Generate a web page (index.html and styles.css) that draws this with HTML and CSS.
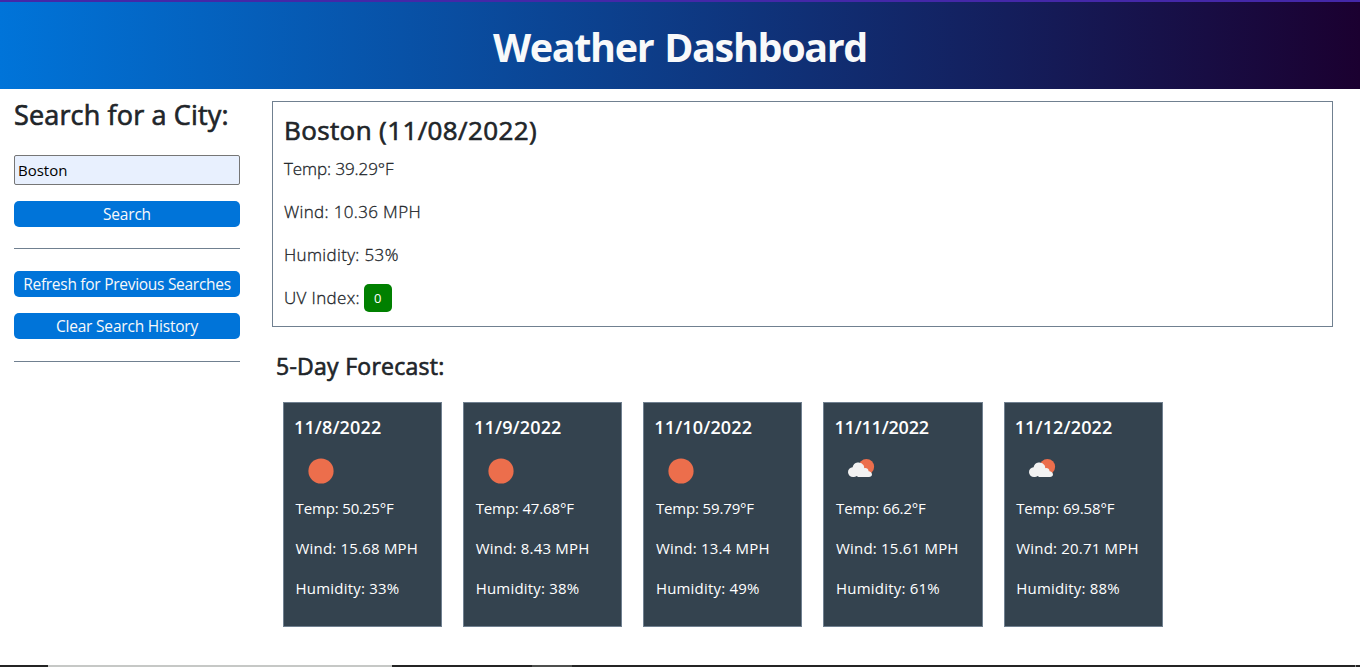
FILE: index.html
```
<!DOCTYPE html>
<html lang="en">
<head>
<meta charset="utf-8">
<title>Weather Dashboard</title>
<link rel="stylesheet" href="styles.css">
</head>
<body>
<svg class="defs" aria-hidden="true">
  <symbol id="sun" viewBox="0 0 50 50"><circle cx="25" cy="25" r="12.6" fill="#ec6e4c"/></symbol>
  <symbol id="cloud" viewBox="0 0 50 50">
    <circle cx="30.4" cy="20.800" r="7.700" fill="#ec6e4c"/>
    <path d="M17 31.100a5 5 0 0 1-5-4.800c0-2.800 2-4.800 4.600-5a6 6 0 0 1 11-2c.5 1 .6 1.900.6 2.900 2.200-.6 4.200.8 4.400 3 1.700.2 3.400 1.300 3.400 3.100 0 1.800-1.300 2.800-3 2.800H22.200l-1.600-1.100c-.8.7-2.200 1.100-3.600 1.100z" fill="#f2f2f2"/>
  </symbol>
</svg>
<header class="header"><h1 class="title">Weather Dashboard</h1></header>
<div class="layout">
  <aside class="sidebar">
    <h2 class="search-title">Search for a City:</h2>
    <input class="city-input" type="text" value="Boston">
    <button class="btn">Search</button>
    <hr class="rule">
    <button class="btn btn-refresh">Refresh for Previous Searches</button>
    <button class="btn btn-clear">Clear Search History</button>
    <hr class="rule rule-end">
  </aside>
  <main class="main">
    <section class="current">
      <h2 class="city">Boston (11/08/2022)</h2>
      <p class="stat temp">Temp: 39.29°F</p>
      <p class="stat">Wind: 10.36 MPH</p>
      <p class="stat">Humidity: 53%</p>
      <p class="stat">UV Index: <span class="uv">0</span></p>
    </section>
    <h3 class="forecast-title">5-Day Forecast:</h3>
    <section class="cards">
      <article class="card"><h4 class="date">11/8/2022</h4><svg class="icon"><use href="#sun"/></svg><p class="info temp">Temp: 50.25°F</p><p class="info">Wind: 15.68 MPH</p><p class="info">Humidity: 33%</p></article>
      <article class="card"><h4 class="date">11/9/2022</h4><svg class="icon"><use href="#sun"/></svg><p class="info temp">Temp: 47.68°F</p><p class="info">Wind: 8.43 MPH</p><p class="info">Humidity: 38%</p></article>
      <article class="card"><h4 class="date">11/10/2022</h4><svg class="icon"><use href="#sun"/></svg><p class="info temp">Temp: 59.79°F</p><p class="info">Wind: 13.4 MPH</p><p class="info">Humidity: 49%</p></article>
      <article class="card"><h4 class="date date-narrow">11/11/2022</h4><svg class="icon"><use href="#cloud"/></svg><p class="info temp">Temp: 66.2°F</p><p class="info">Wind: 15.61 MPH</p><p class="info">Humidity: 61%</p></article>
      <article class="card"><h4 class="date">11/12/2022</h4><svg class="icon"><use href="#cloud"/></svg><p class="info temp">Temp: 69.58°F</p><p class="info">Wind: 20.71 MPH</p><p class="info">Humidity: 88%</p></article>
    </section>
  </main>
</div>
<footer class="strip"></footer>
</body>
</html>
```
FILE: styles.css
```
* { box-sizing: border-box; }
body {
  margin: 0;
  height: 667px;
  overflow: hidden;
  display: flex;
  flex-direction: column;
  background: #fff;
  color: #212529;
  font-family: "Open Sans", "Noto Sans", sans-serif;
}
h1, h2, h3, h4, p { margin: 0; white-space: nowrap; }
.defs { display: none; }
.header {
  height: 89px;
  border-top: 2px solid #4428a8;
  background: linear-gradient(to right, #0074d9, #1b0030);
  display: flex;
  justify-content: center;
  padding-top: 18px;
  flex: none;
}
.title { font-size: 39.500px; line-height: 54px; font-weight: 700; letter-spacing: -1.350px; word-spacing: 2px; color: #f8f9fa; }
.layout { flex: 1; display: flex; padding: 12px 27px 0 14px; gap: 32px; }
.sidebar { width: 226px; flex: none; display: flex; flex-direction: column; }
.search-title, .city, .forecast-title { font-weight: 400; -webkit-text-stroke: 0.65px #212529; }
.search-title { font-size: 27px; line-height: 32px; letter-spacing: 0.15px; margin: -2px 0 24px; }
.city-input {
  height: 30px;
  width: 100%;
  padding: 1px 3px;
  border: 1px solid #767676;
  border-radius: 2px;
  background: #e8f0fe;
  color: #000;
  font: 15px "Open Sans", sans-serif;
}
.btn {
  height: 26px;
  margin-top: 16px;
  padding: 0;
  border: 0;
  border-radius: 5px;
  background: #0074d9;
  color: #f8f9fa;
  font: 15.500px/26px "Open Sans", sans-serif;
  letter-spacing: -0.200px;
  white-space: nowrap;
}
.btn-refresh { letter-spacing: -0.280px; }
.rule { width: 100%; height: 1px; margin: 21px 0 6px; border: 0; background: #708090; }
.rule-end { margin-top: 22px; }
.main { flex: 1; }
.current { height: 226px; border: 1px solid #708090; padding: 12px 11px; }
.city { font-size: 26px; line-height: 32px; letter-spacing: 0.380px; margin-bottom: 8px; }
.stat { font-size: 17px; line-height: 29px; font-weight: 300; letter-spacing: 0.350px; height: 30px; margin-bottom: 13px; -webkit-text-stroke: 0.3px #212529; }
.stat.temp { letter-spacing: -0.080px; }
.uv {
  display: inline-block;
  width: 28px;
  height: 28px;
  margin-left: -1px;
  border-radius: 5px;
  background: #008000;
  color: #fff;
  font-size: 13px;
  font-weight: 400;
  letter-spacing: 0;
  line-height: 28px;
  text-align: center;
  vertical-align: 1px;
  -webkit-text-stroke: 0;
}
.forecast-title { font-size: 23px; line-height: 30px; letter-spacing: 0.270px; margin: 24px 0 21px 4px; }
.cards { display: flex; gap: 21px; padding-left: 10.950px; }
.card {
  width: 159.180px;
  height: 225px;
  flex: none;
  padding: 10px;
  border: 1px solid #708090;
  background: #34434f;
  color: #fff;
}
.date { font-size: 18px; line-height: 28px; font-weight: 600; letter-spacing: 0.150px; }
.date-narrow { letter-spacing: -0.200px; }
.icon { display: block; width: 50px; height: 50px; margin: 5px 0 0 2px; }
.info { font-size: 15px; line-height: 24px; height: 24px; letter-spacing: 0.200px; margin: 0 0 16px 1.600px; }
.info.temp { letter-spacing: -0.150px; }
.strip {
  flex: none;
  height: 2px;
  background: linear-gradient(to right, #242424 48px, #c6c8c6 48px 392px, #242424 392px 532px, #4d4f4d 532px 572px, #242424 572px 1355px, #888 1355px 1356px, #242424 1356px);
}
```
